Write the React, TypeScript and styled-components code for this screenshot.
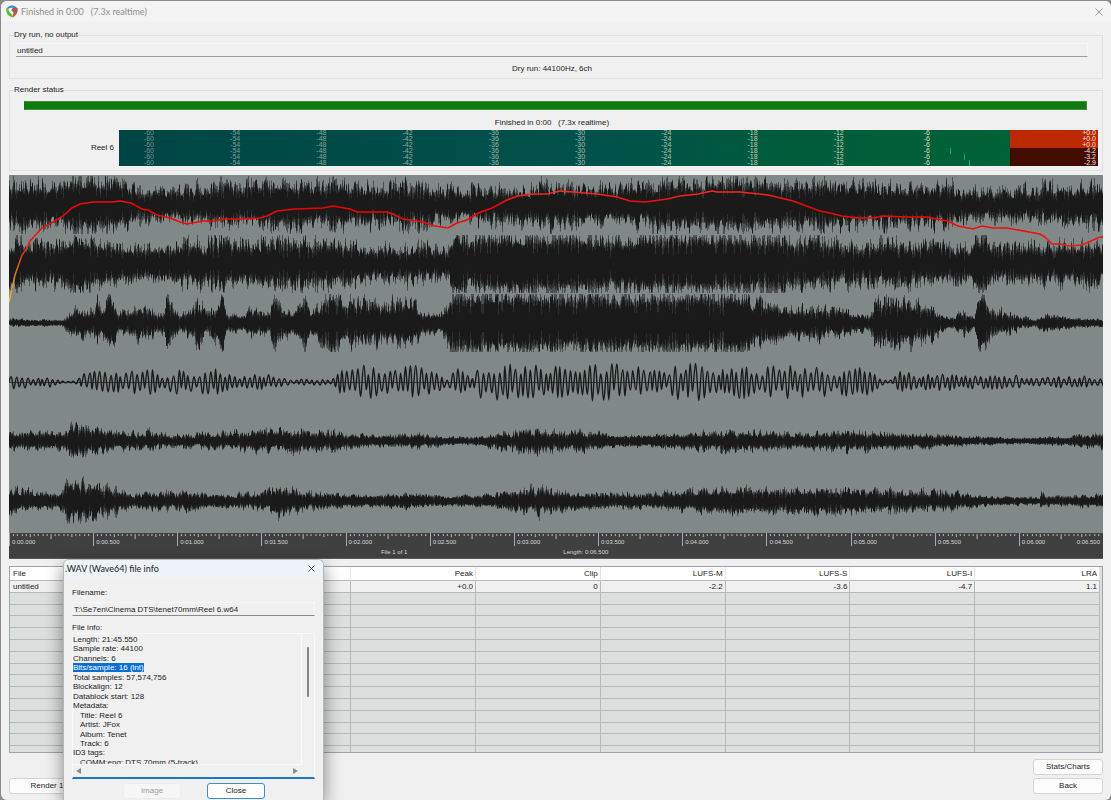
import React from 'react';
import styled, { createGlobalStyle } from 'styled-components';

const GlobalStyle = createGlobalStyle`
  *, *::before, *::after { box-sizing: border-box; }
  body {
    margin: 0;
    background: #8c8a8c;
    color: #1c1c1c;
    font: 8px/10px "Liberation Sans", Arial, sans-serif;
  }
  button, input { font: inherit; color: inherit; }
`;

const Window = styled.main`
  position: relative;
  display: flex;
  flex-direction: column;
  min-height: calc(100vh - 1px);
  margin: 1px 0 0 1px;
  background: #f0f0f0;
  border-radius: 6px;
  overflow: hidden;
`;

const TitleBar = styled.header`
  display: flex;
  align-items: center;
  gap: 3px;
  height: 21px;
  padding: 0 8px 0 5px;
  background: #f3f3f3;
  color: #8f8f8f;
  font: 9px/12px Lato, "Open Sans", sans-serif;
`;

const TitleText = styled.h1`
  flex: 1;
  margin: 0;
  font: inherit;
  white-space: pre;
`;

const IconButton = styled.button<{ $tone: string }>`
  display: flex;
  padding: 0;
  border: 0;
  background: none;
  color: ${(p) => p.$tone};
`;

const Content = styled.div`
  display: flex;
  flex-direction: column;
  flex: 1;
  padding: 8px 8px 5px;
`;

const Group = styled.fieldset<{ $gap: number }>`
  min-width: 0;
  margin: 0 0 ${(p) => p.$gap}px;
  padding: 0 4px 4px;
  border: 1px solid #e0e0e0;
`;

const Legend = styled.legend`
  padding: 0;
`;

const OutputField = styled.input`
  display: block;
  width: calc(100% - 12px);
  height: 14px;
  margin: 3px 0 0 2px;
  padding: 0 1px;
  border: 1px solid #f7f7f7;
  border-left-width: 0;
  border-bottom-color: #9c9c9c;
  background: #f0f0f0;
  outline: 0;
`;

const Status = styled.p<{ $top: number }>`
  margin: ${(p) => p.$top}px 8px 0 0;
  text-align: center;
  white-space: pre;
`;

const Progress = styled.div`
  height: 9px;
  margin: 6px 11px 0 10px;
  border: 1px solid #3e8f3e;
  border-left-color: #0f7b0f;
  background: #0f7b0f;
`;

const MeterRow = styled.div`
  display: flex;
  align-items: center;
  gap: 5px;
  margin-top: 2px;
`;

const MeterName = styled.span`
  width: 100px;
  text-align: right;
`;

const Meter = styled.div`
  display: flex;
  flex: 1;
  height: 36px;
  font-size: 7px;
  line-height: 6px;
`;

const MeterScale = styled.div`
  position: relative;
  display: grid;
  flex: 1;
  grid-template-columns: 35px repeat(9, 1fr) 80px;
  background: linear-gradient(90deg, #004546, #00524a 55%, #005a3c 72%, #006236);
`;

const MeterMark = styled.div<{ $strength: number }>`
  text-align: right;
  color: rgba(232, 226, 214, ${(p) => p.$strength});
`;

const PeakTick = styled.i<{ $right: number; $top: number }>`
  position: absolute;
  right: ${(p) => p.$right}px;
  top: ${(p) => p.$top}px;
  width: 1px;
  height: 6px;
  background: #00b26a;
`;

const ClipZone = styled.div`
  flex: 0 0 88px;
  padding-right: 2px;
  background: linear-gradient(#bc2800 50%, #430c00 50%);
  color: #f0e4e0;
  text-align: right;
`;

const WaveView = styled.section`
  display: flex;
  flex-direction: column;
  background: #808988;

  svg { display: block; width: 100%; }
`;

const Ruler = styled.div`
  height: 26px;
  border-bottom: 1px solid #5c5c5c;
  background: #404040;
  color: #d8d8d8;
  font-size: 6px;
  line-height: 8px;
`;

const RulerScale = styled.div`
  display: grid;
  grid-template-columns: repeat(13, 1fr);
`;

const RulerCell = styled.div`
  position: relative;
  height: 13px;
  border-left: 1px solid #a8a8a8;
  svg { height: 6px; }
`;

const RulerLabels = styled.div`
  position: absolute;
  inset: 5px 3px 0 2px;
  display: flex;
  justify-content: space-between;
`;

const RulerInfo = styled.div`
  display: flex;
  gap: 156px;
  padding: 2px 0 0 34%;
`;

const TableBox = styled.div`
  height: 187px;
  margin-top: 7px;
  padding-right: 2px;
  overflow: hidden;
  border: 1px solid #9fa3ab;
  background: #dcdfde;
`;

const StatsTable = styled.table`
  width: 100%;
  height: 191px;
  table-layout: fixed;
  border-collapse: separate;
  border-spacing: 0;

  th, td {
    height: 11px;
    padding: 0 2px 0 3px;
    border-right: 1px solid #b4b9bb;
    border-bottom: 1px solid #b4b9bb;
    text-align: right;
    line-height: 9px;
    font-weight: 400;
    white-space: nowrap;
  }
  th { height: 14px; background: #fff; border-right-color: #e4e4e4; }
  th:first-child, td:first-child { text-align: left; width: auto; }
  th:not(:first-child) { width: 11.45%; }
`;

const StatsRow = styled.tr<{ $active?: boolean }>`
  background: ${(p) => (p.$active ? '#f0f0f0' : '#dcdfde')};
`;

const Footer = styled.footer`
  display: flex;
  justify-content: space-between;
  align-items: flex-end;
  margin-top: 6px;
`;

const ButtonStack = styled.div`
  display: flex;
  flex-direction: column;
  gap: 3px;
`;

const PushButton = styled.button<{ $width: number; $focus?: boolean }>`
  width: ${(p) => p.$width}px;
  height: 16px;
  padding: 0;
  border: 1px solid ${(p) => (p.$focus ? '#3c8ed0' : '#d4d4d4')};
  border-radius: 3px;
  background: #fdfdfd;
  &:disabled { border-color: #ececec; background: #f6f6f6; color: #9d9d9d; }
`;

const Dialog = styled.section`
  position: absolute;
  left: 62px;
  bottom: 0;
  width: 261px;
  border: 1px solid #b4b8bc;
  border-bottom: 0;
  border-radius: 6px 6px 0 0;
  background: #f0f0f0;
  box-shadow: 0 6px 18px rgba(0, 0, 0, 0.45);
  overflow: hidden;
`;

const DialogTitle = styled.header`
  display: flex;
  align-items: center;
  justify-content: space-between;
  height: 17px;
  padding: 0 8px 0 1px;
  background: #edf3f9;
  font: 9px/12px Lato, "Open Sans", sans-serif;
  h2 { margin: 0; font: inherit; }
`;

const DialogBody = styled.div`
  display: flex;
  flex-direction: column;
  padding: 11px 8px 1px;
`;

const FileField = styled.input`
  height: 14px;
  margin: 4px 0 7px;
  padding: 0 1px;
  border: 1px solid #f7f7f7;
  border-bottom-color: #8a8a8a;
  background: #f0f0f0;
  outline: 0;
`;

const InfoBox = styled.div`
  display: grid;
  grid-template-columns: 1fr 12px;
  grid-template-rows: 131px 12px;
  border: 1px solid #f9f9f9;
  border-bottom: 2px solid #1a76c6;
`;

const InfoViewport = styled.div`
  overflow: hidden;
  border-right: 1px solid #fafafa;
  border-bottom: 1px solid #fafafa;
`;

const InfoLines = styled.div`
  display: flex;
  flex-direction: column;
  justify-content: space-between;
  height: 133px;
  padding-top: 1px;
  line-height: 9px;
  white-space: pre;
`;

const InfoLine = styled.div<{ $indent?: boolean }>`
  padding-left: ${(p) => (p.$indent ? 7 : 0)}px;
`;

const Selected = styled.mark`
  background: #0a6fd0;
  color: #fff;
`;

const ScrollTrack = styled.div`
  display: flex;
  justify-content: center;
  padding-top: 13px;
`;

const ScrollThumb = styled.div`
  width: 2px;
  height: 50px;
  border-radius: 1px;
  background: #858585;
`;

const HorizontalScroll = styled.div`
  display: flex;
  align-items: center;
  justify-content: space-between;
  padding: 0 4px 0 3px;
`;

const DialogActions = styled.div`
  display: flex;
  gap: 26px;
  margin: 4px 0 0 51px;
`;

type Env = [number, number, number];

const WIDTH = 1094;
const CLIP = 29;

const noisyTracks: { centre: number; env: Env[] }[] = [
  { centre: 30, env: [[0,28,14],[50,27,14],[65,29,20],[110,29,17],[125,20,11],[165,18,8],[200,25,12],[230,25,12],[270,29,17],[300,27,13],[330,28,14],[350,23,11],[395,26,11],[415,27,11],[430,18,8],[460,22,8],[500,25,10],[520,21,9],[530,29,12],[550,26,11],[580,20,9],[640,26,10],[655,29,18],[690,27,16],[700,29,18],[740,29,18],[780,25,13],[820,27,14],[870,24,11],[940,26,11],[960,18,8],[1030,20,9],[1034,28,9],[1050,20,9],[1094,28,13]] },
  { centre: 89, env: [[0,27,13],[50,24,12],[65,29,22],[90,28,16],[130,22,12],[160,19,11],[185,28,12],[240,25,12],[265,29,15],[300,29,16],[340,24,12],[360,20,10],[410,26,10],[430,18,9],[440,20,10],[444,29,26],[455,29,20],[465,29,15],[475,29,25],[500,29,22],[560,29,24],[600,29,17],[620,29,19],[640,29,22],[735,29,22],[770,29,20],[800,28,15],[850,25,13],[880,28,14],[930,24,12],[960,19,10],[968,29,22],[976,29,20],[985,20,10],[1094,26,11]] },
  { centre: 148, env: [[0,5,2],[30,4,2],[52,3,2],[57,10,4],[65,16,7],[85,14,7],[88,29,9],[92,14,8],[100,27,14],[104,29,14],[108,10,7],[130,20,8],[155,12,6],[157,29,27],[162,24,12],[170,8,6],[190,26,10],[196,12,7],[206,24,9],[213,29,24],[217,10,7],[235,8,5],[240,20,8],[260,10,7],[264,29,26],[269,22,12],[285,12,7],[296,29,24],[301,12,7],[310,24,12],[316,29,20],[320,29,26],[330,29,18],[336,18,12],[342,29,20],[352,24,10],[380,24,11],[405,25,11],[415,14,6],[430,10,6],[438,24,10],[444,29,26],[470,29,22],[520,29,24],[560,29,20],[590,29,20],[640,29,24],[735,29,22],[745,25,14],[763,25,13],[770,17,11],[795,20,8],[825,17,7],[860,8,5],[866,27,14],[890,28,16],[905,26,14],[925,16,7],[940,6,4],[955,14,5],[965,6,4],[969,29,25],[976,29,24],[981,18,8],[1000,12,4],[1025,3,2],[1035,12,5],[1050,7,5],[1065,5,3],[1094,4,2]] },
  { centre: 266, env: [[0,10,5],[55,10,5],[60,20,11],[70,16,8],[85,14,7],[110,10,5],[140,12,4],[165,6,3],[185,8,3],[250,12,5],[285,14,5],[320,12,4],[361,6,3],[410,8,4],[440,4,2],[470,5,3],[500,12,4],[530,14,6],[560,10,4],[570,12,5],[610,6,4],[640,7,4],[720,12,5],[745,11,5],[790,8,4],[840,12,5],[900,9,4],[960,5,3],[1010,3,2],[1060,5,3],[1080,8,4],[1094,9,5]] },
  { centre: 326, env: [[0,14,6],[50,8,5],[58,22,11],[90,18,7],[110,15,6],[120,8,4],[180,12,4],[200,6,4],[250,10,4],[270,18,7],[295,10,4],[350,6,4],[405,8,4],[440,5,3],[500,10,5],[528,18,7],[560,9,5],[640,8,4],[680,12,6],[720,14,8],[770,13,7],[820,14,8],[880,12,6],[940,11,4],[980,5,3],[1030,4,2],[1031,12,4],[1040,5,3],[1090,7,4],[1094,8,5]] },
];

const lowTrack: [number, number][] = [[0,9],[15,8],[20,3],[40,5],[50,1],[62,1],[72,8],[95,13],[110,10],[140,13],[150,6],[165,13],[180,9],[200,14],[215,10],[230,5],[250,9],[275,3],[320,3],[328,12],[350,16],[361,16],[385,13],[402,17],[420,13],[435,4],[445,16],[460,5],[468,16],[505,19],[515,15],[530,17],[560,14],[580,18],[610,17],[640,15],[655,8],[665,19],[700,17],[712,12],[731,17],[745,10],[758,17],[780,16],[815,14],[825,8],[835,17],[860,12],[872,2],[882,2],[887,12],[905,7],[930,9],[965,6],[1000,8],[1015,3],[1050,6],[1094,5]];

const loudness = '0,127 6,100 13,80 18,73 21,66 33,53 44,47 54,41 63,33 71,29 84,27 103,27 111,26 122,28 133,34 139,35 148,40 161,43 171,47 178,49 194,46 206,46 214,44 231,44 251,43 258,41 268,36 286,34 314,33 324,31 341,34 348,37 378,37 384,39 394,44 414,47 426,51 439,53 448,48 458,45 469,38 483,33 498,25 509,21 524,19 538,19 551,16 564,17 588,19 608,22 621,26 636,27 644,26 658,24 671,21 689,19 703,16 708,17 731,17 759,20 784,26 811,36 821,38 833,41 849,43 864,43 874,41 898,42 918,42 938,46 949,51 964,54 973,51 984,53 998,53 1031,59 1036,62 1043,69 1051,69 1061,71 1073,70 1091,62 1094,62';

function makeRandom(seed: number) {
  let s = seed;
  return () => {
    s = (s * 1664525 + 1013904223) % 4294967296;
    return s / 4294967296;
  };
}

function sample(points: number[][], x: number, channel: number) {
  let i = 1;
  while (i < points.length - 1 && points[i][0] < x) i++;
  const a = points[i - 1];
  const b = points[i];
  const t = Math.min(1, Math.max(0, (x - a[0]) / (b[0] - a[0])));
  return a[channel] + (b[channel] - a[channel]) * t;
}

function peakPaths(centre: number, env: Env[], seed: number) {
  const random = makeRandom(seed);
  const layers = ['', '', ''];
  const line = (x: number, up: number, down: number) =>
    `M${x + 0.5} ${(centre - up).toFixed(1)}V${(centre + down).toFixed(1)}`;
  let swellUp = 0.5;
  let swellDown = 0.5;
  let up = 0;
  let down = 0;
  for (let x = 0; x < WIDTH; x++) {
    const peak = sample(env, x, 1);
    const body = sample(env, x, 2);
    if (x % 3 === 0) {
      swellUp = random();
      swellDown = random();
    }
    const loud = body > 18 ? 1.25 : 1.1;
    const reach = (swell: number, last: number) => {
      const mix = swell * 0.45 + random() * 0.75;
      const value = body * 0.8 + (peak * loud - body * 0.8) * Math.pow(mix, 1.4);
      return Math.min(CLIP, last * 0.2 + value * 0.8);
    };
    up = reach(swellUp, up || body);
    down = reach(swellDown, down || body);
    // an occasional quiet column leaves a thin lighter slit in dense passages
    const slit = random() < 0.12 ? 0.5 : 1;
    const solid = (0.5 + random() * 0.48) * slit;
    const core = body * (0.65 + random() * 0.3) * slit;
    const coreUp = Math.max(up * solid, Math.min(core, up));
    const coreDown = Math.max(down * solid, Math.min(core, down));
    layers[0] += line(x, up, down);
    layers[1] += line(x, (up + coreUp) / 2, (down + coreDown) / 2);
    layers[2] += line(x, coreUp, coreDown);
  }
  return layers;
}

function lowPath(centre: number) {
  const random = makeRandom(77);
  let d = `M0 ${centre}`;
  let x = 0;
  let sign = -1;
  while (x < WIDTH) {
    const step = 1.8 + random() * 1.5;
    const y = centre + sign * sample(lowTrack, x, 1) * (0.45 + random() * 0.6);
    d += `S${(x + step * 0.6).toFixed(1)} ${y.toFixed(1)} ${(x + step).toFixed(1)} ${y.toFixed(1)}`;
    x += step;
    sign = -sign;
  }
  return d;
}

const wavePaths = noisyTracks.map((t, i) => peakPaths(t.centre, t.env, 101 + i * 37));
const rumble = lowPath(207);
const layerOpacity = [0.5, 0.6, 1];

function Waveform() {
  return (
    <svg viewBox="0 0 1094 358" height="358" preserveAspectRatio="none" role="img" aria-label="Rendered waveform">
      <defs>
        <linearGradient id="loudness" gradientUnits="userSpaceOnUse" x1="0" y1="127" x2="0" y2="14">
          <stop offset="0" stopColor="#f2b84c" />
          <stop offset="0.3" stopColor="#d07010" />
          <stop offset="0.5" stopColor="#f01808" />
          <stop offset="0.85" stopColor="#f00000" />
          <stop offset="1" stopColor="#f83030" />
        </linearGradient>
      </defs>
      {wavePaths.map((layers, i) => (
        <g key={i} fill="none" stroke="#1a1a1a">
          {layers.map((d, n) => <path key={n} d={d} opacity={layerOpacity[n]} />)}
        </g>
      ))}
      <path d="M0 207.5H1094" stroke="#1a1a1a" opacity="0.7" />
      <path d={rumble} fill="none" stroke="#1a1a1a" strokeWidth="1.4" />
      <polyline points={loudness} fill="none" stroke="url(#loudness)" strokeWidth="1.5" />
    </svg>
  );
}

const rulerTimes = ['0:00.000', '0:00.500', '0:01.000', '0:01.500', '0:02.000', '0:02.500', '0:03.000', '0:03.500', '0:04.000', '0:04.500', '0:05.000', '0:05.500', '0:06.000'];

function MinorTicks() {
  let d = '';
  for (let i = 1; i < 20; i++) {
    const length = i === 10 ? 6 : i % 5 === 0 ? 4 : 3;
    d += `M${Math.round(i * 4.2) - 0.5} 1V${length}`;
  }
  return (
    <svg viewBox="0 0 84 6" preserveAspectRatio="none" aria-hidden="true">
      <path d={d} stroke="#b8b8b8" />
    </svg>
  );
}

const CloseIcon = ({ size }: { size: number }) => (
  <svg width={size} height={size} viewBox="0 0 8 8" fill="none" stroke="currentColor" aria-hidden="true">
    <path d="M0.5 0.5 7.5 7.5M7.5 0.5 0.5 7.5" strokeWidth="0.9" />
  </svg>
);

const Logo = () => (
  <svg width="12" height="13" viewBox="0 0 24 26" aria-hidden="true">
    <path d="M2 6C6-1 18-1 22 6L20 9C16 4 8 4 4 9Z" fill="#2b8fd0" />
    <path d="M1 6C-1 15 4 22 13 25L13 18C9 16 6 12 5 8Z" fill="#4fc322" />
    <path d="M5 8C9 4 14 6 15 10L15 21 12 19C8 16 5 12 5 8Z" fill="#f6f6f6" />
    <path d="M12 7C16 4 20 6 23 6 25 14 20 22 13 25L15 15 11 11Z" fill="#b5584a" />
  </svg>
);

const meterMarks = ['-60', '-54', '-48', '-42', '-36', '-30', '-24', '-18', '-12', '-6'];
const channelPeaks = ['+0.0', '+0.0', '+0.0', '-4.2', '-3.2', '-2.9'];
const columns = ['File', 'Peak', 'Clip', 'LUFS-M', 'LUFS-S', 'LUFS-I', 'LRA'];
const values = ['untitled', '+0.0', '0', '-2.2', '-3.6', '-4.7', '1.1'];

const infoLines: { text: string; indent?: boolean; selected?: boolean }[] = [
  { text: 'Length: 21:45.550' },
  { text: 'Sample rate: 44100' },
  { text: 'Channels: 6' },
  { text: 'Bits/sample: 16 (int)', selected: true },
  { text: 'Total samples: 57,574,756' },
  { text: 'Blockalign: 12' },
  { text: 'Datablock start: 128' },
  { text: 'Metadata:' },
  { text: 'Title: Reel 6', indent: true },
  { text: 'Artist: JFox', indent: true },
  { text: 'Album: Tenet', indent: true },
  { text: 'Track: 6', indent: true },
  { text: 'ID3 tags:' },
  { text: 'COMM:eng: DTS 70mm (5-track)', indent: true },
];

function FileInfoDialog() {
  return (
    <Dialog role="dialog" aria-labelledby="info-title">
      <DialogTitle>
        <h2 id="info-title">.WAV (Wave64) file info</h2>
        <IconButton $tone="#222" aria-label="Close dialog"><CloseIcon size={7} /></IconButton>
      </DialogTitle>
      <DialogBody>
        <label htmlFor="filename">Filename:</label>
        <FileField id="filename" readOnly value="T:\Se7en\Cinema DTS\tenet70mm\Reel 6.w64" />
        <span id="info-label">File info:</span>
        <InfoBox role="group" aria-labelledby="info-label">
          <InfoViewport>
            <InfoLines>
              {infoLines.map((l) => (
                <InfoLine key={l.text} $indent={l.indent}>
                  {l.selected ? <Selected>{l.text}</Selected> : l.text}
                </InfoLine>
              ))}
            </InfoLines>
          </InfoViewport>
          <ScrollTrack><ScrollThumb /></ScrollTrack>
          <HorizontalScroll>
            <svg width="5" height="6" viewBox="0 0 5 6" aria-hidden="true"><path d="M5 0V6L0 3Z" fill="#8c8c8c" /></svg>
            <svg width="5" height="6" viewBox="0 0 5 6" aria-hidden="true"><path d="M0 0V6L5 3Z" fill="#8c8c8c" /></svg>
          </HorizontalScroll>
        </InfoBox>
        <DialogActions>
          <PushButton $width={58} disabled>Image</PushButton>
          <PushButton $width={58} $focus>Close</PushButton>
        </DialogActions>
      </DialogBody>
    </Dialog>
  );
}

export default function App() {
  return (
    <>
      <GlobalStyle />
      <Window>
        <TitleBar>
          <Logo />
          <TitleText>{'Finished in 0:00   (7.3x realtime)'}</TitleText>
          <IconButton $tone="#8a8a8a" aria-label="Close window"><CloseIcon size={8} /></IconButton>
        </TitleBar>
        <Content>
          <Group $gap={6}>
            <Legend>Dry run, no output</Legend>
            <OutputField aria-label="Output file" readOnly value="untitled" />
            <Status $top={7}>Dry run: 44100Hz, 6ch</Status>
          </Group>
          <Group $gap={4}>
            <Legend>Render status</Legend>
            <Progress role="progressbar" aria-label="Render progress" aria-valuenow={100} />
            <Status $top={8}>{'Finished in 0:00   (7.3x realtime)'}</Status>
            <MeterRow>
              <MeterName>Reel 6</MeterName>
              <Meter>
                <MeterScale>
                  {meterMarks.map((m, i) => (
                    <MeterMark key={m} $strength={0.48 + i * 0.05}>
                      {channelPeaks.map((_, n) => <div key={n}>{m}</div>)}
                    </MeterMark>
                  ))}
                  <PeakTick $right={59} $top={18} />
                  <PeakTick $right={45} $top={24} />
                  <PeakTick $right={40} $top={30} />
                </MeterScale>
                <ClipZone>
                  {channelPeaks.map((p, n) => <div key={n}>{p}</div>)}
                </ClipZone>
              </Meter>
            </MeterRow>
          </Group>
          <WaveView>
            <Waveform />
            <Ruler>
              <RulerScale>
                {rulerTimes.map((t, i) => (
                  <RulerCell key={t}>
                    <MinorTicks />
                    <RulerLabels>
                      <span>{t}</span>
                      {i === rulerTimes.length - 1 && <span>0:06.500</span>}
                    </RulerLabels>
                  </RulerCell>
                ))}
              </RulerScale>
              <RulerInfo>
                <span>File 1 of 1</span>
                <span>Length: 0:06.500</span>
              </RulerInfo>
            </Ruler>
          </WaveView>
          <TableBox>
            <StatsTable>
              <thead>
                <tr>{columns.map((c) => <th key={c} scope="col">{c}</th>)}</tr>
              </thead>
              <tbody>
                <StatsRow $active>{values.map((v, i) => <td key={i}>{v}</td>)}</StatsRow>
                {Array.from({ length: 14 }, (_, r) => (
                  <StatsRow key={r}>{columns.map((c) => <td key={c} />)}</StatsRow>
                ))}
              </tbody>
            </StatsTable>
          </TableBox>
          <Footer>
            <PushButton $width={76}>Render 1</PushButton>
            <ButtonStack>
              <PushButton $width={70}>Stats/Charts</PushButton>
              <PushButton $width={70}>Back</PushButton>
            </ButtonStack>
          </Footer>
        </Content>
        <FileInfoDialog />
      </Window>
    </>
  );
}
